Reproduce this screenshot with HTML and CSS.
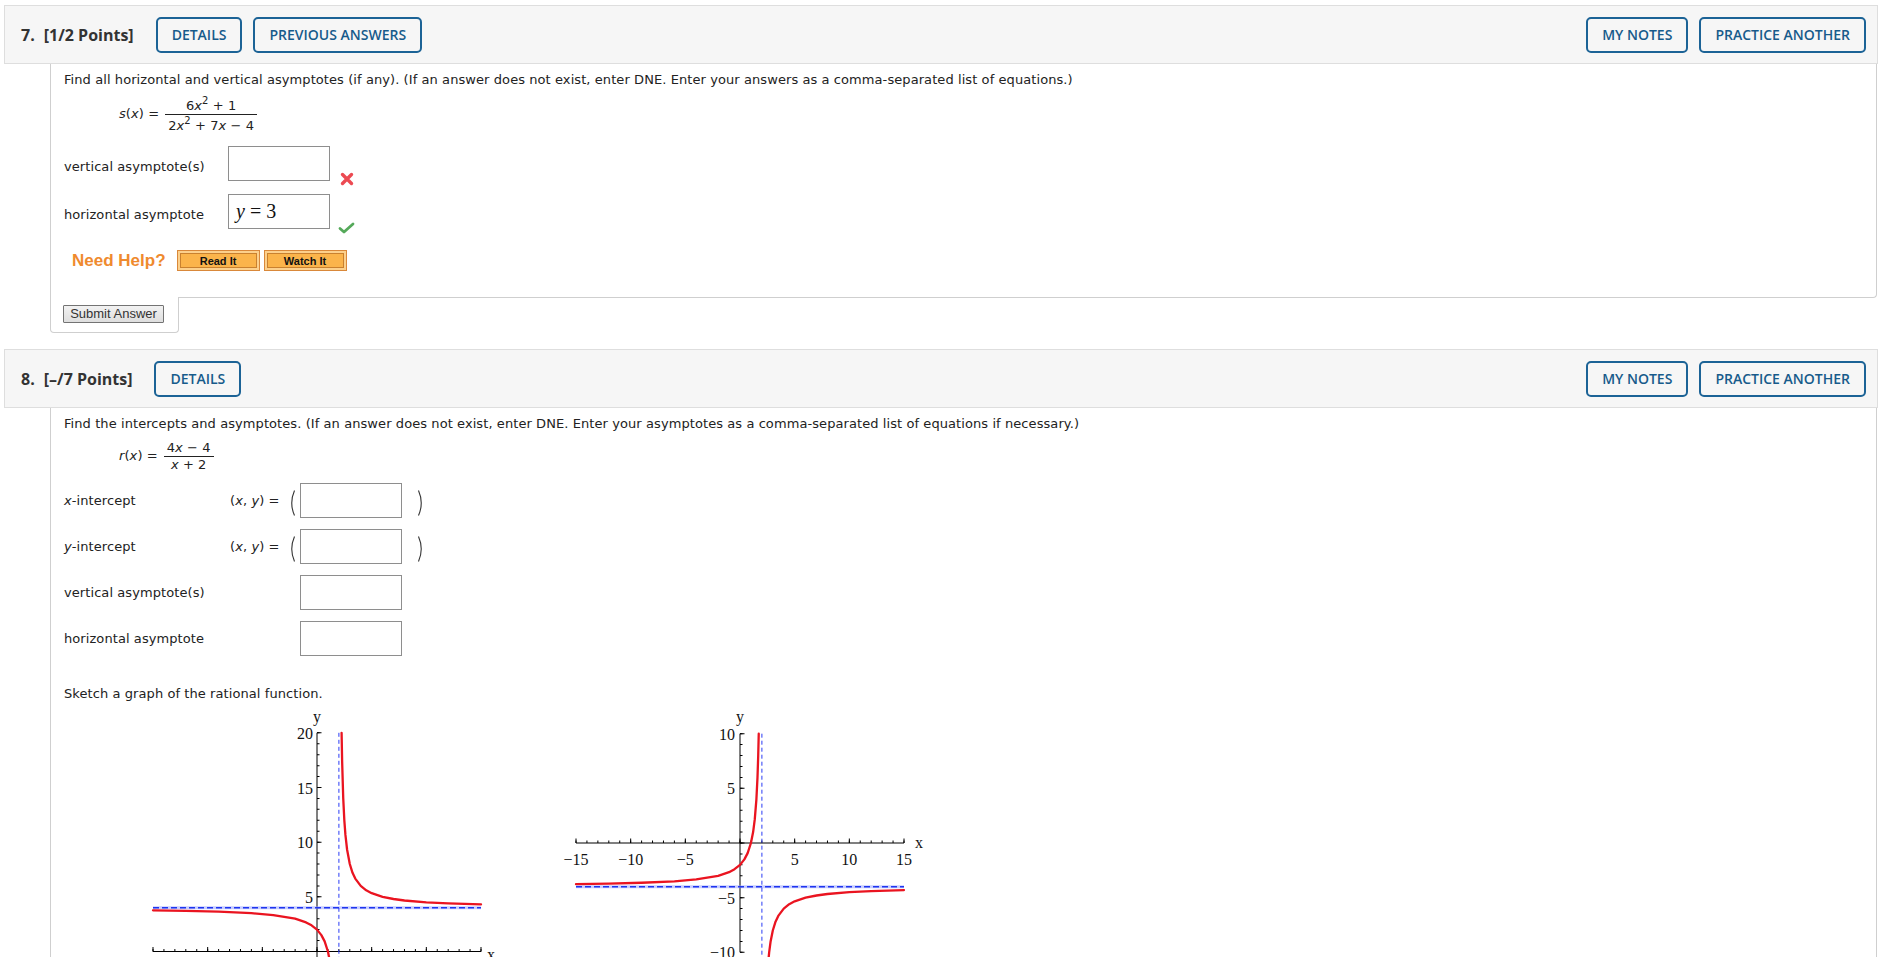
FILE: index.html
```html
<!DOCTYPE html>
<html>
<head>
<meta charset="utf-8">
<title>Questions</title>
<link rel="stylesheet" href="styles.css">
</head>
<body>
<div class="page">

  <section class="q">
    <div class="qhead">
      <span class="qnum">7.</span><span class="pts">[1/2 Points]</span>
      <button class="hbtn">DETAILS</button>
      <button class="hbtn">PREVIOUS ANSWERS</button>
      <span class="spacer"></span>
      <button class="hbtn">MY NOTES</button>
      <button class="hbtn">PRACTICE ANOTHER</button>
    </div>
    <div class="qbody q7">
      <p class="prompt">Find all horizontal and vertical asymptotes (if any). (If an answer does not exist, enter DNE. Enter your answers as a comma-separated list of equations.)</p>
      <div class="eq eq7">
        <span class="lhs"><i>s</i>(<i>x</i>) =</span>
        <span class="frac">
          <span class="num">6<i>x</i><sup>2</sup> + 1</span>
          <span class="den den-sup">2<i>x</i><sup>2</sup> + 7<i>x</i> &minus; 4</span>
        </span>
      </div>
      <div class="arow">
        <span class="alabel">vertical asymptote(s)</span>
        <span class="ans"></span>
        <span class="mark mark-x"><svg width="14" height="14" viewBox="0 0 14 14"><path d="M2.5 2.5L11.5 11.5M11.5 2.5L2.5 11.5" stroke="#ec4a52" stroke-width="3.4" stroke-linecap="round"/></svg></span>
      </div>
      <div class="arow arow2">
        <span class="alabel">horizontal asymptote</span>
        <span class="ans ans-math"><i class="mv">y</i><span class="mo">=</span><span class="mn">3</span></span>
        <span class="mark mark-ok"><svg width="17" height="12" viewBox="0 0 17 12"><path d="M2 6.5L6 10L15 2" stroke="#55a95a" stroke-width="2.8" fill="none" stroke-linecap="round" stroke-linejoin="round"/></svg></span>
      </div>
      <div class="help">
        <span class="needhelp">Need Help?</span>
        <button class="helpbtn"><span>Read It</span></button>
        <button class="helpbtn"><span>Watch It</span></button>
      </div>
    </div>
    <div class="qfoot"><button class="submit">Submit Answer</button></div>
  </section>

  <section class="q q8sec">
    <div class="qhead">
      <span class="qnum">8.</span><span class="pts">[&ndash;/7 Points]</span>
      <button class="hbtn">DETAILS</button>
      <span class="spacer"></span>
      <button class="hbtn">MY NOTES</button>
      <button class="hbtn">PRACTICE ANOTHER</button>
    </div>
    <div class="qbody q8">
      <p class="prompt">Find the intercepts and asymptotes. (If an answer does not exist, enter DNE. Enter your asymptotes as a comma-separated list of equations if necessary.)</p>
      <div class="eq eq8">
        <span class="lhs"><i>r</i>(<i>x</i>) =</span>
        <span class="frac">
          <span class="num">4<i>x</i> &minus; 4</span>
          <span class="den"><i>x</i> + 2</span>
        </span>
      </div>
      <div class="irow first">
        <span class="ilabel"><i>x</i>-intercept</span>
        <span class="xy">(<i>x</i>, <i>y</i>) =</span>
        <svg class="paren" width="8" height="28" viewBox="0 0 8 28"><path d="M6.5 1.5Q1 14 6.5 26.5" stroke="#333" stroke-width="1.1" fill="none"/></svg>
        <span class="ans"></span>
        <svg class="paren rparen" width="8" height="28" viewBox="0 0 8 28"><path d="M1.5 1.5Q7 14 1.5 26.5" stroke="#333" stroke-width="1.1" fill="none"/></svg>
      </div>
      <div class="irow">
        <span class="ilabel"><i>y</i>-intercept</span>
        <span class="xy">(<i>x</i>, <i>y</i>) =</span>
        <svg class="paren" width="8" height="28" viewBox="0 0 8 28"><path d="M6.5 1.5Q1 14 6.5 26.5" stroke="#333" stroke-width="1.1" fill="none"/></svg>
        <span class="ans"></span>
        <svg class="paren rparen" width="8" height="28" viewBox="0 0 8 28"><path d="M1.5 1.5Q7 14 1.5 26.5" stroke="#333" stroke-width="1.1" fill="none"/></svg>
      </div>
      <div class="irow">
        <span class="ilabel wide">vertical asymptote(s)</span>
        <span class="ans"></span>
      </div>
      <div class="irow">
        <span class="ilabel wide">horizontal asymptote</span>
        <span class="ans"></span>
      </div>
      <p class="prompt sketch">Sketch a graph of the rational function.</p>
      <svg class="plots" width="800" height="262" viewBox="0 0 800 262">
        <g class="ax">
          <line x1="13" y1="246.5" x2="341" y2="246.5"/>
          <line x1="177" y1="27.8" x2="177" y2="262"/>
          <line x1="436" y1="138" x2="764" y2="138"/>
          <line x1="600" y1="28.7" x2="600" y2="247.3"/>
        </g>
        <g class="ticks">
          <line x1="12.5" y1="245.25" x2="341.5" y2="245.25" stroke-width="2.5" stroke-dasharray="1 9.933"/>
          <line x1="12.5" y1="244.25" x2="341.5" y2="244.25" stroke-width="4.5" stroke-dasharray="1 53.667"/>
          <line x1="178.25" y1="27.33" x2="178.25" y2="262" stroke-width="2.5" stroke-dasharray="1 9.933"/>
          <line x1="179.25" y1="27.33" x2="179.25" y2="262" stroke-width="4.5" stroke-dasharray="1 53.667"/>
          <line x1="435.5" y1="136.75" x2="764.5" y2="136.75" stroke-width="2.5" stroke-dasharray="1 9.933"/>
          <line x1="435.5" y1="135.75" x2="764.5" y2="135.75" stroke-width="4.5" stroke-dasharray="1 53.667"/>
          <line x1="601.25" y1="28.17" x2="601.25" y2="248" stroke-width="2.5" stroke-dasharray="1 9.933"/>
          <line x1="602.25" y1="28.17" x2="602.25" y2="248" stroke-width="4.5" stroke-dasharray="1 53.667"/>
        </g>
        <g class="lbl">
          <text x="177" y="17" text-anchor="middle">y</text>
          <text x="173" y="33.5" text-anchor="end">20</text>
          <text x="173" y="88.5" text-anchor="end">15</text>
          <text x="173" y="143" text-anchor="end">10</text>
          <text x="173" y="197.5" text-anchor="end">5</text>
          <text x="351" y="255" text-anchor="middle">x</text>

          <text x="600" y="17" text-anchor="middle">y</text>
          <text x="595" y="34.5" text-anchor="end">10</text>
          <text x="595" y="89" text-anchor="end">5</text>
          <text x="595" y="198.5" text-anchor="end">&minus;5</text>
          <text x="595" y="253" text-anchor="end">&minus;10</text>
          <text x="779" y="143" text-anchor="middle">x</text>
          <text x="436" y="159.5" text-anchor="middle">&minus;15</text>
          <text x="490.7" y="159.5" text-anchor="middle">&minus;10</text>
          <text x="545.3" y="159.5" text-anchor="middle">&minus;5</text>
          <text x="654.7" y="159.5" text-anchor="middle">5</text>
          <text x="709.3" y="159.5" text-anchor="middle">10</text>
          <text x="764" y="159.5" text-anchor="middle">15</text>
        </g>
        <g class="asym">
          <line class="hglow" x1="13" y1="202.8" x2="341" y2="202.8"/>
          <line class="hdash" x1="13" y1="202.8" x2="341" y2="202.8"/>
          <line class="vdash" x1="198.9" y1="27.8" x2="198.9" y2="262"/>
          <line class="hglow" x1="436" y1="181.7" x2="764" y2="181.7"/>
          <line class="hdash" x1="436" y1="181.7" x2="764" y2="181.7"/>
          <line class="vdash" x1="621.9" y1="28.7" x2="621.9" y2="262"/>
        </g>
        <g class="curve">
          <polyline points="201.6,27.8 202.15,57 203.24,93.4 204.33,115.3 205.43,129.9 207.07,144.5 209.8,159 212.53,167.8 215.27,173.6 220.73,180.9 226.2,185.3 231.67,188.2 242.6,191.8 253.53,194 264.47,195.5 286.33,197.3 308.2,198.4 341,199.4"/>
          <polyline points="13,205.3 45.8,205.9 78.6,206.7 111.4,208.2 133.27,210.1 155.13,213.7 166.07,217.4 171.53,220.3 177,224.6 181.37,230.1 184.65,236.4 187.93,246.5 190.12,257.4 192.31,275.7"/>
          <polyline points="436,179.2 468.8,178.6 501.6,177.75 534.4,176.3 556.27,174.4 578.13,170.8 589.07,167.2 594.53,164.2 600,159.9 604.37,154.4 607.65,148.1 610.93,138 613.12,127.1 614.76,114.45 616.4,94.3 617.49,72.4 618.22,50.5 618.74,28.7"/>
          <polyline points="628.1,258.3 629.16,247.3 630.61,236.4 632.8,225.5 635.53,216.7 638.27,210.9 643.73,203.6 649.2,199.2 654.67,196.3 665.6,192.7 676.53,190.5 687.47,189 709.33,187.2 731.2,186.1 764,185.1"/>
        </g>
      </svg>
    </div>
  </section>

</div>
</body>
</html>
```

FILE: styles.css
```css
html, body {
  margin: 0;
  padding: 0;
  background: #fff;
}
body {
  font-family: "DejaVu Sans", Verdana, sans-serif;
  font-size: 13px;
  letter-spacing: 0.08px;
  color: #222;
  overflow: hidden;
}
.page {
  padding: 5px 16px 0 4px;
}

/* header bar */
.qhead {
  display: flex;
  align-items: center;
  height: 59px;
  box-sizing: border-box;
  padding: 0 11px 0 16px;
  background: #f6f6f6;
  border: 1px solid #dedede;
  font-family: "Open Sans", sans-serif;
  letter-spacing: 0;
}
.qnum, .pts {
  font-weight: 700;
  font-size: 16px;
  color: #333;
}
.pts {
  margin-left: 9px;
  margin-right: 22px;
}
.spacer { flex: 1; }
.hbtn {
  height: 36px;
  box-sizing: border-box;
  padding: 0 14px;
  margin: 0 11px 0 0;
  border: 2px solid #1c6396;
  border-radius: 5px;
  background: transparent;
  color: #175b8b;
  font-family: "Open Sans", sans-serif;
  font-weight: 600;
  font-size: 14px;
  line-height: 32px;
  cursor: pointer;
}
.hbtn:last-child { margin-right: 0; }

/* question body */
.qbody {
  margin: 0 1px 0 46px;
  padding: 8px 13px 0 13px;
  border: 1px solid #cfcfcf;
  border-top: none;
  border-bottom-right-radius: 4px;
}
.q7 { padding-bottom: 26px; }
.q8 { border-bottom: none; min-height: 700px; }
.prompt {
  margin: 0;
  line-height: 16px;
}
i { font-style: italic; }

.eq {
  display: flex;
  align-items: flex-start;
  padding-left: 55px;
  margin-top: 10px;
  line-height: 16px;
}
.eq8 { margin-top: 8px; }
.lhs {
  margin-top: 8px;
  margin-right: 6px;
}
.frac {
  display: flex;
  flex-direction: column;
  align-items: center;
}
.num {
  align-self: stretch;
  text-align: center;
  border-bottom: 1px solid #222;
  padding: 0 3px;
  height: 16px;
}
.den { padding: 0 3px; }
.den-sup { padding-top: 3px; }
sup {
  font-size: 10px;
  line-height: 0;
  vertical-align: 6px;
}

/* Q7 answers */
.arow {
  display: flex;
  height: 40px;
  margin-top: 12px;
}
.arow2 { margin-top: 8px; }
.alabel {
  width: 164px;
  align-self: center;
}
.ans {
  display: flex;
  align-items: center;
  width: 102px;
  height: 35px;
  box-sizing: border-box;
  border: 1px solid #8e8e8e;
  background: #fff;
}
.ans-math {
  padding-left: 7px;
  font-family: "Liberation Serif", "DejaVu Serif", serif;
  font-size: 20px;
  letter-spacing: 0;
  color: #111;
}
.mv { font-style: italic; }
.mo { margin: 0 5px 0 5px; }
.mark {
  align-self: flex-end;
  margin-left: 10px;
  display: flex;
}
.mark-x { height: 14px; }
.mark-ok { height: 12px; margin-left: 8px; }

/* need help */
.help {
  display: flex;
  align-items: center;
  height: 21px;
  margin-top: 16px;
  padding-left: 8px;
  letter-spacing: 0;
}
.needhelp {
  font-family: "Liberation Sans", Arial, sans-serif;
  font-weight: 700;
  font-size: 17px;
  color: #ef8a2e;
  margin-right: 11px;
}
.helpbtn {
  width: 83px;
  height: 21px;
  box-sizing: border-box;
  padding: 2px;
  margin: 0 4px 0 0;
  border: 1px solid #d9883a;
  background: #fcd08c;
  cursor: pointer;
}
.helpbtn span {
  display: flex;
  height: 100%;
  box-sizing: border-box;
  align-items: center;
  justify-content: center;
  border: 1px solid #c9812f;
  background: #fbb44b;
  font-family: "Liberation Sans", Arial, sans-serif;
  font-weight: 700;
  font-size: 11px;
  color: #111;
}

/* submit tab */
.qfoot {
  width: 129px;
  height: 36px;
  box-sizing: border-box;
  margin: -1px 0 0 46px;
  padding: 8px 0 0 12px;
  background: #fff;
  border: 1px solid #cfcfcf;
  border-top: none;
  border-radius: 0 0 4px 4px;
}
.submit {
  display: block;
  width: 101px;
  height: 18px;
  padding: 0;
  box-sizing: border-box;
  border: 1px solid #737373;
  border-radius: 1px;
  background: linear-gradient(#f2f2f2, #dedede);
  font-family: "Liberation Sans", Arial, sans-serif;
  font-size: 13px;
  line-height: 16px;
  letter-spacing: 0;
  color: #333;
}

.q8sec { margin-top: 16px; }

/* Q8 answers */
.irow {
  display: flex;
  align-items: center;
  height: 35px;
  margin-top: 11px;
}
.irow.first { margin-top: 10px; }
.ilabel { width: 166px; }
.ilabel.wide { width: 236px; }
.xy { width: 58px; }
.paren { margin: 4px 4px 0 0; }
.rparen { margin: 4px 0 0 15px; }

.sketch { margin-top: 30px; }

/* plots */
.plots {
  display: block;
  margin: 3px 0 0 76px;
  overflow: visible;
  letter-spacing: 0;
}
.ax line { stroke: #000; stroke-width: 1; }
.ticks line { stroke: #000; }
.lbl text {
  font-family: "Liberation Serif", "DejaVu Serif", serif;
  font-size: 16px;
  fill: #111;
}
.hglow { stroke: #9aa6ff; stroke-width: 3; opacity: 0.55; }
.hdash { stroke: #1f35f0; stroke-width: 1.5; stroke-dasharray: 6 3; }
.vdash { stroke: #2a3cf5; stroke-width: 1; stroke-dasharray: 4 3; }
.curve polyline {
  fill: none;
  stroke: #ea1420;
  stroke-width: 2.3;
  stroke-linejoin: round;
  stroke-linecap: round;
}
```
